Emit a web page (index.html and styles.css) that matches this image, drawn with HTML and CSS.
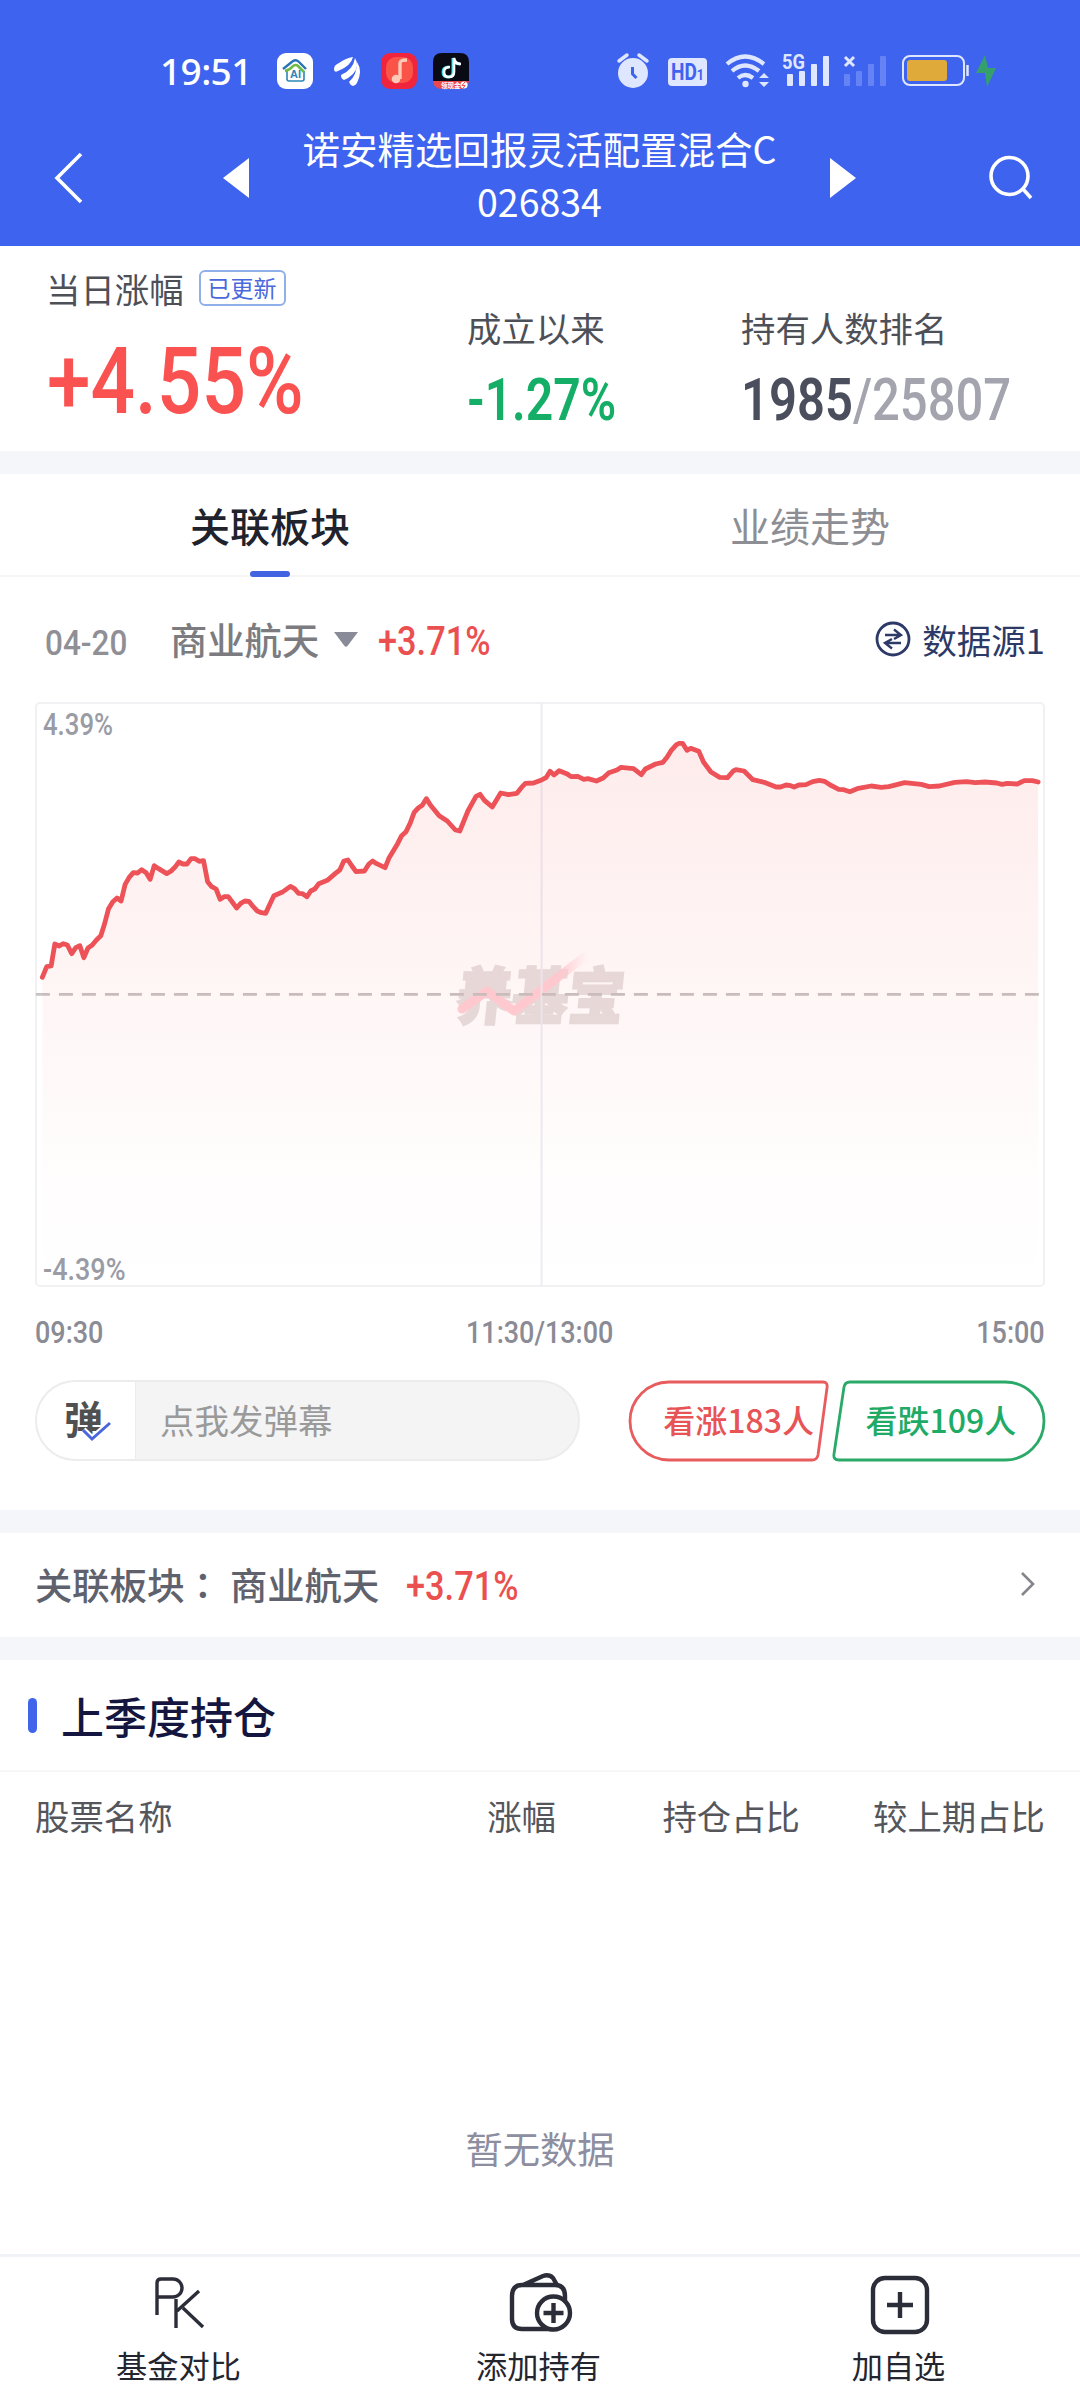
FILE: index.html
```html
<!DOCTYPE html>
<html lang="zh-CN">
<head>
<meta charset="utf-8">
<title>诺安精选回报灵活配置混合C</title>
<link rel="stylesheet" href="styles.css">
</head>
<body>
<header class="top">
  <div class="status">
    <span class="clock">19:51</span>
    <svg class="apps" width="192" height="36" viewBox="0 0 192 36">
      <rect width="36" height="36" rx="9" fill="#fff"/>
      <path d="M10 18v8q0 2 2 2h13q2 0 2-2v-8" fill="none" stroke="#2c86b4" stroke-width="1.6"/>
      <path d="M6 16 16 8q3-2 6 1l7 7" fill="none" stroke="#2873b8" stroke-width="2.4"/>
      <path d="M8 18q5-1 8-5 3-2 5 0l6 6" fill="none" stroke="#6dbb45" stroke-width="2.6"/>
      <text x="13" y="25" class="ai">AI</text>
      <g fill="#fff"><path d="M57 16q0-4 5-6 7-5 14-6-2 9-15 14-4 2-4-2Z"/><path d="M64 22q12-5 14-17 5 8-2 16-4 4-9 6-3-1-3-5Z"/><path d="M72 29q8-7 8-20 6 9 0 21-2 3-4 3-3-1-4-4Z"/></g>
      <rect x="104" width="36" height="36" rx="9" fill="#f0243c"/><rect x="109" y="4" width="27" height="26" rx="10" fill="#fa5348"/>
      <path d="M123 26V10q0-3 7-3" fill="none" stroke="#ffc9b8" stroke-width="3.4"/><circle cx="119" cy="26" r="4.3" fill="#ffc9b8"/>
      <path d="M156 9q0-9 9-9h18q9 0 9 9v19h-36Z" fill="#0a0a14"/>
      <path d="M156 28h36q-1 8-9 8h-18q-8 0-9-8Z" fill="#e9494d"/>
      <path d="M172 14q-6 0-6 5t5 5 5-5V5q1 6 7 6" fill="none" stroke="#35e0df" stroke-width="3"/>
      <path d="M173 14q-6 0-6 5t5 5 5-5V5q1 6 7 6" fill="none" stroke="#fff" stroke-width="2.6"/>
      <text x="164" y="34.500" class="appt">领现金</text>
      <circle cx="187" cy="32" r="3.600" fill="#fff"/><path d="m188 29-3 3.500h3l-2 3" stroke="#e9494d" fill="none"/>
    </svg>
    <svg class="sys" width="384" height="36" viewBox="616 53 384 36">
      <g fill="#dfe6ff">
        <circle cx="633" cy="73" r="15"/>
        <path d="m619 61 8-6M647 61l-8-6" stroke="#dfe6ff" stroke-width="3.500" stroke-linecap="round"/>
        <path d="M632.500 67v7l4 4" fill="none" stroke="#3e63ee" stroke-width="3"/>
        <rect x="668" y="58" width="39" height="28" rx="4"/>
        <text x="671" y="80" class="hd" textLength="33" lengthAdjust="spacingAndGlyphs">HD<tspan class="hd1">1</tspan></text>
        <g fill="none" stroke="#dfe6ff" stroke-width="4.200"><path d="M727 64q18-15 37 0"/><path d="M732 71q13-11 27 0"/><path d="M738 78q7-6 15 0"/></g>
        <circle cx="745.500" cy="84" r="3.200"/>
        <path d="m759 78 5-5 5 5ZM759 82l5 5 5-5Z"/>
        <text x="782" y="69" class="g5" textLength="23" lengthAdjust="spacingAndGlyphs">5G</text>
        <rect x="787" y="74" width="6" height="12" rx="1"/><rect x="799" y="71" width="6" height="15" rx="1"/><rect x="811" y="64" width="6" height="22" rx="1"/><rect x="823" y="56" width="6" height="30" rx="1"/>
        <path d="m845 57 9 9m0-9-9 9" stroke="#dfe6ff" stroke-width="3"/>
      </g>
      <g fill="#6583f5"><rect x="844" y="74" width="6" height="12" rx="1"/><rect x="856" y="71" width="6" height="15" rx="1"/><rect x="868" y="64" width="6" height="22" rx="1"/><rect x="880" y="56" width="6" height="30" rx="1"/></g>
      <rect x="903" y="56" width="61" height="29" rx="7" fill="none" stroke="#dfe6ff" stroke-width="2"/>
      <rect x="907" y="60" width="40" height="21" rx="3" fill="#dfaa3a"/><path d="M967.500 65v11" stroke="#dfe6ff" stroke-width="2.500"/>
      <path d="m985 55-9 18h9l2 14 9-19h-8Z" fill="#35a06b"/>
    </svg>
  </div>
  <div class="nav">
    <svg width="30" height="52" viewBox="0 0 30 52"><path d="M27 2 3 26l24 24" class="w3"/></svg>
    <svg class="prev" width="26" height="40" viewBox="0 0 26 40"><path d="M26 0v40L0 20Z" fill="#fff"/></svg>
    <h1>诺安精选回报灵活配置混合C<br>026834</h1>
    <svg width="26" height="40" viewBox="0 0 26 40"><path d="M0 0v40l26-20Z" fill="#fff"/></svg>
    <svg class="search" width="44" height="44" viewBox="0 0 44 44"><circle cx="20.500" cy="20" r="18.500" class="w3"/><path d="m34 33 8 9" class="w3"/></svg>
  </div>
</header>

<section class="stats">
  <div class="day">
    <div class="label">当日涨幅<span class="badge">已更新</span></div>
    <div class="big"><span class="num n-big">+4.55%</span></div>
  </div>
  <div class="since">
    <div class="label">成立以来</div>
    <div class="mid"><span class="num n-since">-1.27%</span></div>
  </div>
  <div class="rank">
    <div class="label">持有人数排名</div>
    <div class="mid"><span class="num n-rank">1985<i>/25807</i></span></div>
  </div>
</section>

<nav class="tabs"><a class="tab on">关联板块</a><a class="tab">业绩走势</a></nav>

<section class="sector">
  <span class="date"><span class="num n-date">04-20</span></span>
  <span class="name">商业航天</span>
  <svg class="caret" width="24" height="15" viewBox="0 0 24 15"><path d="M0 0h24L13.500 14q-1.500 1.500-3 0Z" fill="#898b99"/></svg>
  <span class="pct"><span class="num n-pct">+3.71%</span></span>
  <svg class="swap" width="36" height="36" viewBox="0 0 36 36"><circle cx="18" cy="18" r="16" fill="none" stroke="#2d3967" stroke-width="2.800"/><path d="M10 14h15M19 8.500l7 5.500-7 4M26 22H11m6 5.500L10 22l7-4" fill="none" stroke="#2d3967" stroke-width="2.400"/></svg>
  <span class="source">数据源1</span>
</section>

<section class="chart">
  <div class="mark">
    <span>养基宝</span>
    <svg width="130" height="62" viewBox="0 0 130 62"><defs><linearGradient id="z" x1="0" x2="1"><stop offset=".75" stop-color="#ffcfd6"/><stop offset="1" stop-color="#ffcfd6" stop-opacity="0"/></linearGradient></defs><path d="M5 54 30 36 57 56 130 0" fill="none" stroke="url(#z)" stroke-width="9" stroke-linecap="round" stroke-linejoin="round"/></svg>
  </div>
  <svg class="plot" viewBox="47.300 39 2982 1749" preserveAspectRatio="none">
    <defs><linearGradient id="fill" x1="0" y1="0" x2="0" y2="1"><stop offset="0" stop-color="#fa5151" stop-opacity=".11"/><stop offset=".8" stop-color="#fa5151" stop-opacity=".012"/><stop offset="1" stop-color="#fa5151" stop-opacity="0"/></linearGradient></defs>
    <path d="M1543 39V1788" class="grid"/>
    <path d="M47 913H3016" class="zero"/>
    <path class="area" d="M66 862 79 830 92 828 103 762 116 768 128 761 140 765 153 791 165 773 177 767 189 803 201 774 213 766 226 750 239 737 250 702 262 656 274 636 287 624 299 633 311 583 323 562 335 548 348 549 360 539 373 548 385 568 397 527 410 536 434 551 447 543 458 532 470 516 482 522 494 522 506 506 518 506 530 514 543 512 555 575 567 590 580 597 592 628 604 620 616 620 641 654 653 640 665 633 677 634 690 650 702 663 714 668 727 670 738 645 751 617 775 607 800 589 812 596 824 610 836 611 849 620 860 603 872 597 884 581 909 571 933 550 946 540 958 513 970 510 982 528 994 545 1019 543 1032 522 1043 513 1055 521 1080 533 1092 503 1117 461 1129 437 1142 425 1154 400 1166 367 1178 354 1190 346 1202 326 1214 345 1240 377 1264 393 1288 420 1301 423 1325 363 1349 319 1361 313 1374 331 1397 351 1422 309 1445 314 1470 310 1483 293 1495 280 1519 279 1543 270 1557 262 1568 244 1580 255 1595 242 1619 252 1630 260 1650 259 1668 268 1680 266 1705 273 1725 264 1742 248 1766 240 1778 232 1815 236 1838 254 1850 237 1880 222 1902 217 1914 202 1926 182 1942 164 1950 160 1960 160 1973 181 1984 175 2008 184 2022 216 2044 246 2070 262 2093 263 2110 243 2118 239 2142 243 2168 269 2205 278 2237 291 2250 291 2266 285 2280 287 2290 291 2304 285 2325 284 2345 275 2365 271 2380 274 2397 285 2422 298 2437 299 2455 305 2480 295 2518 288 2548 292 2570 290 2617 278 2666 283 2690 290 2720 288 2765 277 2800 275 2826 278 2855 276 2890 279 2905 283 2920 280 2950 282 2971 272 2995 272 3012 276V1788H66Z"/>
    <path class="line" d="M66 862 79 830 92 828 103 762 116 768 128 761 140 765 153 791 165 773 177 767 189 803 201 774 213 766 226 750 239 737 250 702 262 656 274 636 287 624 299 633 311 583 323 562 335 548 348 549 360 539 373 548 385 568 397 527 410 536 434 551 447 543 458 532 470 516 482 522 494 522 506 506 518 506 530 514 543 512 555 575 567 590 580 597 592 628 604 620 616 620 641 654 653 640 665 633 677 634 690 650 702 663 714 668 727 670 738 645 751 617 775 607 800 589 812 596 824 610 836 611 849 620 860 603 872 597 884 581 909 571 933 550 946 540 958 513 970 510 982 528 994 545 1019 543 1032 522 1043 513 1055 521 1080 533 1092 503 1117 461 1129 437 1142 425 1154 400 1166 367 1178 354 1190 346 1202 326 1214 345 1240 377 1264 393 1288 420 1301 423 1325 363 1349 319 1361 313 1374 331 1397 351 1422 309 1445 314 1470 310 1483 293 1495 280 1519 279 1543 270 1557 262 1568 244 1580 255 1595 242 1619 252 1630 260 1650 259 1668 268 1680 266 1705 273 1725 264 1742 248 1766 240 1778 232 1815 236 1838 254 1850 237 1880 222 1902 217 1914 202 1926 182 1942 164 1950 160 1960 160 1973 181 1984 175 2008 184 2022 216 2044 246 2070 262 2093 263 2110 243 2118 239 2142 243 2168 269 2205 278 2237 291 2250 291 2266 285 2280 287 2290 291 2304 285 2325 284 2345 275 2365 271 2380 274 2397 285 2422 298 2437 299 2455 305 2480 295 2518 288 2548 292 2570 290 2617 278 2666 283 2690 290 2720 288 2765 277 2800 275 2826 278 2855 276 2890 279 2905 283 2920 280 2950 282 2971 272 2995 272 3012 276"/>
  </svg>
  <span class="ymax"><span class="num n-ax">4.39%</span></span>
  <span class="ymin"><span class="num n-ax wide">-4.39%</span></span>
</section>
<div class="times"><span class="num tl">09:30</span><span class="num tc">11:30/13:00</span><span class="num tr">15:00</span></div>

<section class="actions">
  <div class="danmu">
    <div class="toggle">弹<svg width="32" height="22" viewBox="0 0 32 22"><path d="m2 9 9 9L29 2" fill="none" stroke="#fff" stroke-width="7"/><path d="m2 9 9 9L29 2" fill="none" stroke="#4a66dc" stroke-width="3"/></svg></div>
    <div class="hint">点我发弹幕</div>
  </div>
  <div class="vote up"><svg width="202" height="82" viewBox="0 0 202 82"><path d="M41 2H195q5 0 4 6L190 75q-1 5-6 5H41A39 39 0 0 1 41 2Z"/></svg><span>看涨183人</span></div>
  <div class="vote down"><svg width="214" height="82" viewBox="0 0 214 82"><path d="M173 2H18q-5 0-6 5L2 74q-1 6 5 6H173A39 39 0 0 0 173 2Z"/></svg><span>看跌109人</span></div>
</section>

<section class="related">
  <span lang="zh-TW" class="rtitle">关联板块：</span><span class="rname">商业航天</span>
  <span class="pct"><span class="num n-pct">+3.71%</span></span>
  <svg class="more" width="16" height="26" viewBox="0 0 16 26"><path d="m2 2 11 11L2 24" fill="none" stroke="#85868c" stroke-width="2.600"/></svg>
</section>

<section class="holdings">
  <h2>上季度持仓</h2>
  <div class="thead"><span>股票名称</span><span>涨幅</span><span>持仓占比</span><span>较上期占比</span></div>
  <p class="empty">暂无数据</p>
</section>

<footer class="dock">
  <a><svg width="64" height="62" viewBox="0 0 64 62"><path d="M10 43V11Q10 7 14 7H26a9 9 0 0 1 0 18H10M29 27V56M52 19 30 39M36 36 56 55" class="ic"/></svg>基金对比</a>
  <a><svg class="r1" width="64" height="62" viewBox="0 0 64 62"><path d="M46 57H14Q4 57 4 47V24Q4 13 14 13H47Q57 13 57 24V30M15 13 35 4Q41 2 45 6L49 13" class="ic b"/><circle cx="45.500" cy="41" r="16.500" class="ic b disc"/><path d="M45.500 31V51M35.500 41H55.500" class="ic b"/></svg>添加持有</a>
  <a><svg class="r1" width="64" height="62" viewBox="0 0 64 62"><rect x="5" y="6" width="54" height="54" rx="12" class="ic b"/><path d="M32 20V46M19 33H45" class="ic b"/></svg>加自选</a>
</footer>
</body>
</html>
```
FILE: styles.css
```css
* { box-sizing: border-box; }
body { margin: 0; width: 1080px; height: 2400px; background: #fff; font-family: "Noto Sans CJK SC", sans-serif; display: flex; flex-direction: column; overflow: hidden; }
svg { display: block; flex: none; overflow: visible; }
h1, h2, p { margin: 0; font-weight: 400; }

/* condensed numerals */
.num { display: inline-block; font-family: Roboto, sans-serif; font-weight: 500; white-space: nowrap; transform-origin: 0 50%; }

.top { height: 246px; background: #3e63ee; color: #fff; flex: none; }
.status { height: 106px; padding: 53px 80px 0 160px; display: flex; }
.clock { width: 117px; font: 500 37px/35px "Noto Sans", sans-serif; letter-spacing: -.6px; }
.sys { margin-left: auto; }
.ai { font: 700 11px "Liberation Sans", sans-serif; fill: #2c86b4; }
.appt { font: 700 6.500px "Noto Sans CJK SC", sans-serif; fill: #fff; }
.hd { font: 700 23px Roboto, sans-serif; fill: #3e63ee; }
.hd1 { font-size: 15px; }
.g5 { font: 700 21px Roboto, sans-serif; }
.nav { height: 140px; padding: 4px 47px 0 54px; display: flex; align-items: center; }
.nav .prev { margin-left: 139px; }
.nav h1 { flex: 1; text-align: center; font-size: 37.500px; line-height: 53px; margin-top: -8px; }
.search { margin-left: 133px; }
.w3 { fill: none; stroke: #fff; stroke-width: 3.600; }

.stats { height: 228px; border-bottom: 23px solid #f5f6fa; display: flex; flex: none; }
.label { font-size: 34.400px; line-height: 50px; color: #4e5058; display: flex; align-items: center; }
.day { width: 467px; padding: 15px 0 0 46px; }
.day .label { line-height: 54px; }
.badge { margin-left: 15px; width: 87px; height: 36px; border: 2px solid #8fb0e8; border-radius: 6px; font-size: 23px; line-height: 30px; text-align: center; color: #4a68dc; }
.since { width: 274px; padding-top: 56px; }
.rank { padding-top: 56px; }
.big { height: 90px; margin-top: 13px; line-height: 90px; font-size: 92px; color: #fa5151; }
.mid { height: 60px; margin-top: 13px; line-height: 60px; font-size: 59px; color: #4b4e5c; }
.since .mid { color: #15ae67; }
.n-big { transform: scaleX(.852); font-weight: 500; margin-left: 1px; }
.n-since { transform: scaleX(.815); font-weight: 600; }
.n-rank { transform: scaleX(.83); font-weight: 600; }
.n-rank i { font-style: normal; font-weight: 500; color: #a3a4ae; }

.tabs { height: 103px; border-bottom: 2px solid #f5f5f6; display: flex; flex: none; }
.tab { flex: 1; text-align: center; font-size: 40px; line-height: 102px; color: #8d8e94; position: relative; }
.tab.on { color: #20222c; font-weight: 500; }
.tab.on::after { content: ""; position: absolute; left: 250px; top: 97px; width: 40px; height: 6px; border-radius: 3px; background: #4364e0; }

.sector { height: 126px; padding: 0 35px 2px 45px; display: flex; align-items: center; flex: none; }
.date { width: 125px; font-size: 35px; color: #8f8f95; }
.n-date { transform: scaleX(.9); }
.name { width: 164px; font-size: 37.300px; color: #7c7c80; font-weight: 500; }
.pct { width: 130px; font-size: 41px; color: #eb5050; margin-top: -4px; }
.n-pct { transform: scaleX(.838); }
.caret { margin-right: 20px; }
.swap { margin-left: auto; margin-right: 11px; }
.source { font-size: 34.500px; color: #2d3967; }

.chart { width: 1010px; height: 585px; margin: -1px 35px 0; border: 2px solid #f1f1f4; border-radius: 5px; position: relative; flex: none; }
.plot { position: absolute; left: -1px; top: -1px; width: 1008px; height: 583px; }
.grid { stroke: #ececf3; stroke-width: 2; vector-effect: non-scaling-stroke; }
.zero { stroke: #c8c2c2; stroke-width: 2.600; stroke-dasharray: 14 9; vector-effect: non-scaling-stroke; }
.area { fill: url(#fill); }
.line { fill: none; stroke: #ec5257; stroke-width: 4.800; stroke-linejoin: round; stroke-linecap: round; vector-effect: non-scaling-stroke; }
.mark { position: absolute; left: 420px; top: 254px; width: 175px; height: 76px; color: #e6dfdf; }
.mark span { font-weight: 900; font-size: 56px; line-height: 70px; display: block; transform: skewX(-6deg) scaleY(1.1); -webkit-text-stroke: 2px #e6dfdf; white-space: nowrap; }
.mark svg { position: absolute; left: 0; top: -3px; }
.ymax, .ymin { position: absolute; left: 6px; font-size: 31px; line-height: 36px; color: #9a9ca5; }
.ymax { top: 0; }
.ymin { bottom: -3px; }
.n-ax { transform: scaleX(.83); }
.n-ax.wide { transform: scaleX(.87); }
.times { height: 93px; padding: 28px 35px 0; display: flex; justify-content: space-between; font-size: 31px; line-height: 36px; color: #8a8b95; flex: none; }
.times .num { transform: scaleX(.87); }
.times .tc { transform-origin: 50% 50%; }
.times .tr { transform-origin: 100% 50%; }

.actions { height: 130px; padding: 0 35px; display: flex; flex: none; }
.danmu { width: 547px; height: 81px; border: 2px solid #ececec; border-radius: 41px; overflow: hidden; background: #f4f4f4; display: flex; margin-right: 48px; }
.toggle { width: 99px; background: #fff; border-right: 1px solid #ececec; font-size: 39px; font-weight: 700; line-height: 71px; color: #505050; padding-left: 27px; position: relative; }
.toggle svg { position: absolute; left: 44px; top: 39px; }
.hint { padding-left: 24px; font-size: 34.500px; line-height: 75px; color: #9a9a9a; }
.vote { position: relative; font-size: 32px; line-height: 79px; height: 82px; font-weight: 500; }
.vote svg { position: absolute; left: 0; top: 0; fill: none; stroke-width: 2.800; }
.vote span { display: block; white-space: nowrap; }
.up { width: 204px; color: #e85355; padding-left: 35px; }
.up svg { stroke: #e85c5e; }
.down { width: 214px; color: #1fab66; padding-left: 34px; }
.down svg { stroke: #2aa968; }

.related { height: 150px; border: solid #f5f6fa; border-width: 23px 0; padding: 0 44px 2px 35px; display: flex; align-items: center; font-size: 37.300px; font-weight: 500; color: #5f626d; flex: none; }
.rtitle { width: 195px; font-family: "Noto Sans CJK TC", sans-serif; white-space: nowrap; }
.rname { width: 176px; }
.more { margin-left: auto; }

.holdings { height: 594px; flex: none; }
.holdings h2 { height: 112px; padding-left: 61px; font-size: 43px; line-height: 111px; font-weight: 500; color: #14163f; border-bottom: 2px solid #f7f7f9; position: relative; }
.holdings h2::before { content: ""; position: absolute; left: 28px; top: 38px; width: 9px; height: 35px; border-radius: 5px; background: #4165ea; }
.thead { height: 90px; padding: 0 35px; display: grid; grid-template-columns: 382px 139px 244px 245px; font-size: 34.400px; line-height: 87px; color: #55565c; text-align: right; }
.thead span:first-child { text-align: left; }
.empty { padding-top: 258px; text-align: center; font-size: 37.300px; line-height: 56px; color: #8d8ea0; }

.dock { height: 147px; border-top: 3px solid #f1f3f7; display: flex; flex: none; background: #fff; }
.dock a { flex: 1; display: flex; flex-direction: column; align-items: center; padding: 15px 3px 0 0; font-size: 31.200px; line-height: 44px; color: #23252f; gap: 9px; }
.dock .r1 { margin-left: 3px; }
.ic { fill: none; stroke: #2b2d38; stroke-width: 3.400; }
.b { stroke-width: 4.400; }
.disc { fill: #fff; }
```
